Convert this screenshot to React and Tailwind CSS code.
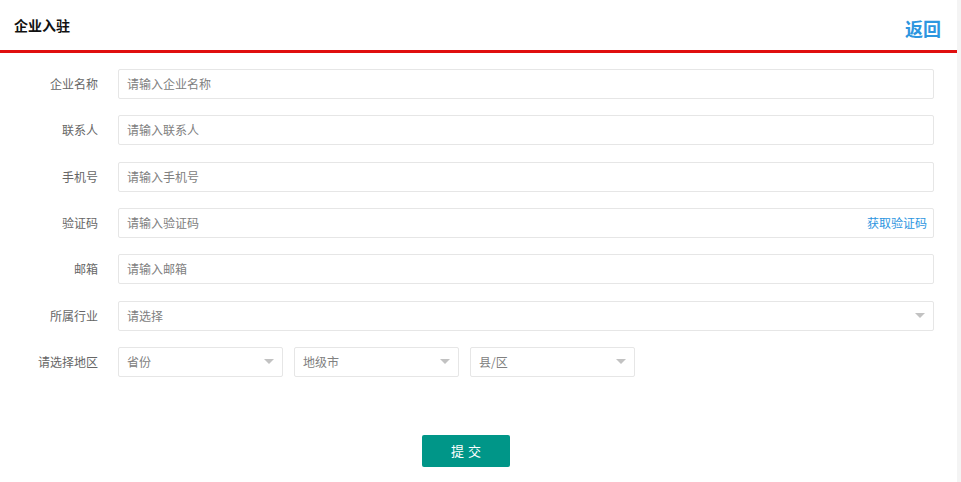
import React from "react";

const font = { fontFamily: '"Microsoft YaHei", "Noto Sans CJK SC", "Noto Sans", sans-serif' };

function Arrow() {
  return (
    <svg width="10" height="5" viewBox="0 0 10 5" className="shrink-0">
      <path d="M0 0 L10 0 L5 5 Z" fill="#c2c2c2" />
    </svg>
  );
}

function Row({ label, children }) {
  return (
    <div className="flex items-center h-[30px]">
      <div className="w-[98px] text-right text-[12px] text-[#666] shrink-0">{label}</div>
      <div className="ml-[20px] flex-1 flex h-[30px]">{children}</div>
    </div>
  );
}

function TextInput({ placeholder, extra }) {
  return (
    <div className="flex-1 flex items-center border border-[#e6e6e6] bg-white rounded-[2px] h-[30px] pl-[8px] pr-[6px]">
      <input
        placeholder={placeholder}
        className="flex-1 outline-none bg-transparent text-[12px] text-[#333] placeholder:text-[#808080]"
        style={font}
      />
      {extra}
    </div>
  );
}

function Select({ text, className }) {
  return (
    <div className={"flex items-center justify-between border border-[#e6e6e6] bg-white rounded-[2px] h-[30px] pl-[8px] pr-[8px] " + className}>
      <span className="text-[12px] text-[#808080]">{text}</span>
      <Arrow />
    </div>
  );
}

export default function App() {
  return (
    <div className="flex w-[961px] h-[482px] bg-[#f4f4f4]" style={font}>
      <div className="w-[957px] h-full bg-white flex flex-col">
        <div className="h-[50px] flex items-center justify-between pl-[14px] pr-[16px] border-b-[3px] border-[#e00f0f] box-content">
          <div className="text-[14px] font-bold text-[#111]">企业入驻</div>
          <div className="text-[18px] font-bold text-[#2d96df] pt-[6px]">返回</div>
        </div>
        <div className="flex flex-col gap-[16.33px] pt-[16px] pr-[23px]">
          <Row label="企业名称"><TextInput placeholder="请输入企业名称" /></Row>
          <Row label="联系人"><TextInput placeholder="请输入联系人" /></Row>
          <Row label="手机号"><TextInput placeholder="请输入手机号" /></Row>
          <Row label="验证码">
            <TextInput
              placeholder="请输入验证码"
              extra={<span className="text-[12px] text-[#2d96df] cursor-pointer">获取验证码</span>}
            />
          </Row>
          <Row label="邮箱"><TextInput placeholder="请输入邮箱" /></Row>
          <Row label="所属行业"><Select text="请选择" className="flex-1" /></Row>
          <Row label="请选择地区">
            <div className="flex gap-[11px]">
              <Select text="省份" className="w-[165px]" />
              <Select text="地级市" className="w-[165px]" />
              <Select text="县/区" className="w-[165px]" />
            </div>
          </Row>
        </div>
        <div className="mt-[58px] ml-[422px]">
          <button
            className="w-[88px] h-[32px] bg-[#009688] text-white text-[13px] rounded-[2px] tracking-[4px] pl-[4px]"
            style={font}
          >
            提交
          </button>
        </div>
      </div>
    </div>
  );
}
